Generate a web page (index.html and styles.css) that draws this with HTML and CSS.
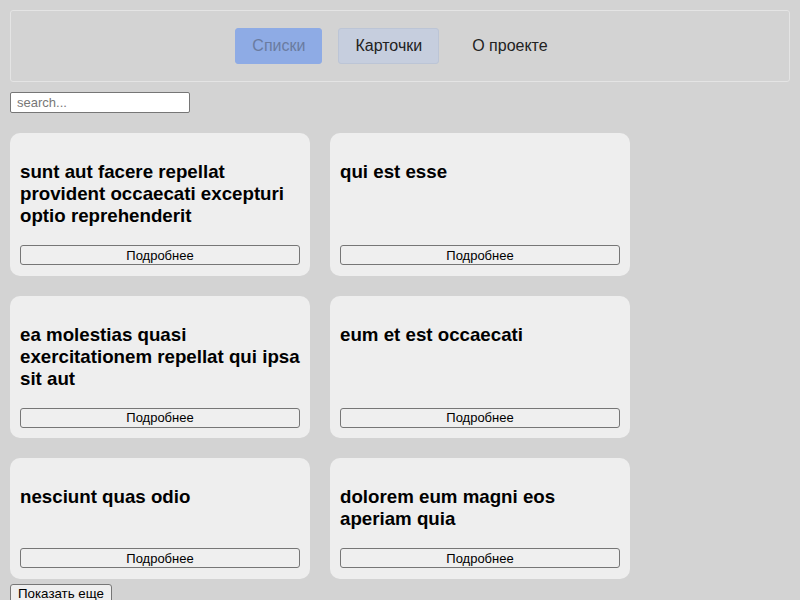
FILE: index.html
```html
<!DOCTYPE html>
<html lang="ru">
<head>
<meta charset="utf-8">
<link rel="stylesheet" href="styles.css">
</head>
<body>
<header class="nav">
  <button class="nav-btn nav-btn--active">Списки</button>
  <button class="nav-btn nav-btn--current">Карточки</button>
  <button class="nav-btn">О проекте</button>
</header>
<input class="search" type="text" placeholder="search...">
<main class="cards">
  <div class="card"><h3 class="card-title">sunt aut facere repellat provident occaecati excepturi optio reprehenderit</h3><button class="card-btn">Подробнее</button></div>
  <div class="card"><h3 class="card-title">qui est esse</h3><button class="card-btn">Подробнее</button></div>
  <div class="card"><h3 class="card-title">ea molestias quasi exercitationem repellat qui ipsa sit aut</h3><button class="card-btn">Подробнее</button></div>
  <div class="card"><h3 class="card-title">eum et est occaecati</h3><button class="card-btn">Подробнее</button></div>
  <div class="card"><h3 class="card-title">nesciunt quas odio</h3><button class="card-btn">Подробнее</button></div>
  <div class="card"><h3 class="card-title">dolorem eum magni eos aperiam quia</h3><button class="card-btn">Подробнее</button></div>
</main>
<button class="more-btn">Показать еще</button>
</body>
</html>
```
FILE: styles.css
```css
html, body {
  margin: 0;
  background: #d3d3d3;
  font-family: "Liberation Sans", Arial, sans-serif;
}
body {
  padding: 10px;
}
.nav {
  display: flex;
  justify-content: center;
  gap: 16px;
  padding: 17px 0;
  border: 1px solid #e4e4e4;
  border-radius: 3px;
}
.nav-btn {
  font-family: "Liberation Sans", Arial, sans-serif;
  font-size: 16px;
  height: 36px;
  padding: 0 16px;
  border: 1px solid transparent;
  border-radius: 3px;
  background: transparent;
  color: #222;
}
.nav-btn--active {
  background: #8eabe5;
  border-color: #8eabe5;
  color: #6a7ba0;
}
.nav-btn--current {
  background: #c6cede;
  border-color: #bcc5d6;
  color: #222;
}
.search {
  display: block;
  margin-top: 10px;
  width: 180px;
  height: 21px;
  box-sizing: border-box;
  font-family: "Liberation Sans", Arial, sans-serif;
  font-size: 13px;
  padding: 1px 6px;
  border: 1px solid #767676;
  border-radius: 2px;
  background: #fff;
}
.search::placeholder {
  color: #777;
}
.cards {
  display: grid;
  grid-template-columns: repeat(2, 300px);
  gap: 20px 20px;
  margin-top: 20px;
  margin-bottom: 5px;
}
.card {
  display: flex;
  flex-direction: column;
  background: #eeeeee;
  border-radius: 10px;
  padding: 10px 10px 10.5px;
}
.card-title {
  margin: 18px 0;
  font-size: 18.72px;
  font-weight: bold;
  color: #000;
}
.card-btn {
  margin-top: auto;
  height: 20px;
  padding: 0 6px;
  font-family: "Liberation Sans", Arial, sans-serif;
  font-size: 13px;
  color: #000;
  background: #efefef;
  border: 1px solid #767676;
  border-radius: 3px;
}
.more-btn {
  display: block;
  font-family: "Liberation Sans", Arial, sans-serif;
  font-size: 13.33px;
  padding: 1px 7px;
  color: #000;
  background: #efefef;
  border: 1px solid #767676;
  border-radius: 3px;
}
```
